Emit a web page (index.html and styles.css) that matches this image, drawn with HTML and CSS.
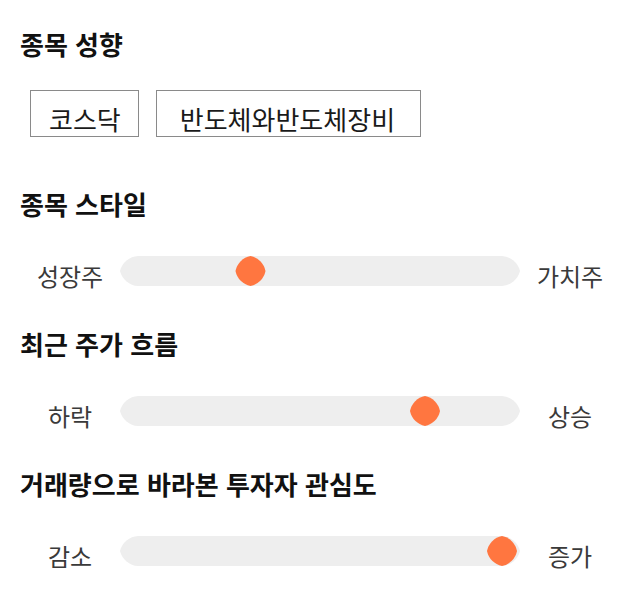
FILE: index.html
```html
<!DOCTYPE html>
<html lang="ko">
<head>
<meta charset="utf-8">
<link rel="stylesheet" href="styles.css">
</head>
<body>
<main class="page">
  <section class="section">
    <h2 class="section-title">종목 성향</h2>
    <div class="tags">
      <span class="tag">코스닥</span>
      <span class="tag tag-wide">반도체와반도체장비</span>
    </div>
  </section>

  <section class="section">
    <h2 class="section-title">종목 스타일</h2>
    <div class="slider-row">
      <span class="slider-label">성장주</span>
      <svg class="slider" width="400" height="30" viewBox="0 0 400 30">
        <path class="track" d="M0 15 A20 20 0 0 1 18 0 H382 A20 20 0 0 1 400 15 A20 20 0 0 1 382 30 H18 A20 20 0 0 1 0 15 Z"/>
        <g transform="translate(115.5 0)"><path class="thumb" d="M15 0 A19 19 0 0 1 30 15 A19 19 0 0 1 15 30 A19 19 0 0 1 0 15 A19 19 0 0 1 15 0 Z"/></g>
      </svg>
      <span class="slider-label">가치주</span>
    </div>
  </section>

  <section class="section">
    <h2 class="section-title">최근 주가 흐름</h2>
    <div class="slider-row">
      <span class="slider-label">하락</span>
      <svg class="slider" width="400" height="30" viewBox="0 0 400 30">
        <path class="track" d="M0 15 A20 20 0 0 1 18 0 H382 A20 20 0 0 1 400 15 A20 20 0 0 1 382 30 H18 A20 20 0 0 1 0 15 Z"/>
        <g transform="translate(290 0)"><path class="thumb" d="M15 0 A19 19 0 0 1 30 15 A19 19 0 0 1 15 30 A19 19 0 0 1 0 15 A19 19 0 0 1 15 0 Z"/></g>
      </svg>
      <span class="slider-label">상승</span>
    </div>
  </section>

  <section class="section">
    <h2 class="section-title">거래량으로 바라본 투자자 관심도</h2>
    <div class="slider-row">
      <span class="slider-label">감소</span>
      <svg class="slider" width="400" height="30" viewBox="0 0 400 30">
        <path class="track" d="M0 15 A20 20 0 0 1 18 0 H382 A20 20 0 0 1 400 15 A20 20 0 0 1 382 30 H18 A20 20 0 0 1 0 15 Z"/>
        <g transform="translate(367 0)"><path class="thumb" d="M15 0 A19 19 0 0 1 30 15 A19 19 0 0 1 15 30 A19 19 0 0 1 0 15 A19 19 0 0 1 15 0 Z"/></g>
      </svg>
      <span class="slider-label">증가</span>
    </div>
  </section>
</main>
</body>
</html>
```

FILE: styles.css
```css
html, body {
  margin: 0;
  padding: 0;
  background: #ffffff;
}

body {
  font-family: "Noto Sans CJK KR", "Noto Sans", sans-serif;
  color: #111111;
}

.page {
  width: 640px;
  padding: 26px 20px 40px;
  box-sizing: border-box;
  display: flex;
  flex-direction: column;
}

.section + .section {
  margin-top: 40px;
}

.section:nth-child(2) {
  margin-top: 49px;
}

.section-title {
  margin: 0;
  font-size: 26px;
  line-height: 35px;
  font-weight: 700;
  color: #111111;
}

.tags {
  display: flex;
  gap: 17px;
  margin-top: 29px;
  padding-left: 10px;
}

.tag {
  display: block;
  box-sizing: border-box;
  height: 47px;
  border: 1px solid #8a8a8a;
  font-size: 26px;
  line-height: 35px;
  padding: 10px 17px 0 18px;
  color: #1a1a1a;
}

.tag-wide {
  padding-left: 23px;
  padding-right: 25px;
}

.slider-row {
  display: grid;
  grid-template-columns: 100px 400px 100px;
  align-items: start;
  margin-top: 35px;
}

.slider-label {
  height: 30px;
  text-align: center;
  font-size: 24px;
  line-height: 40px;
  color: #3a3a3a;
}

.slider {
  display: block;
}

.track {
  fill: #eeeeee;
}

.thumb {
  fill: #ff7640;
}
```
